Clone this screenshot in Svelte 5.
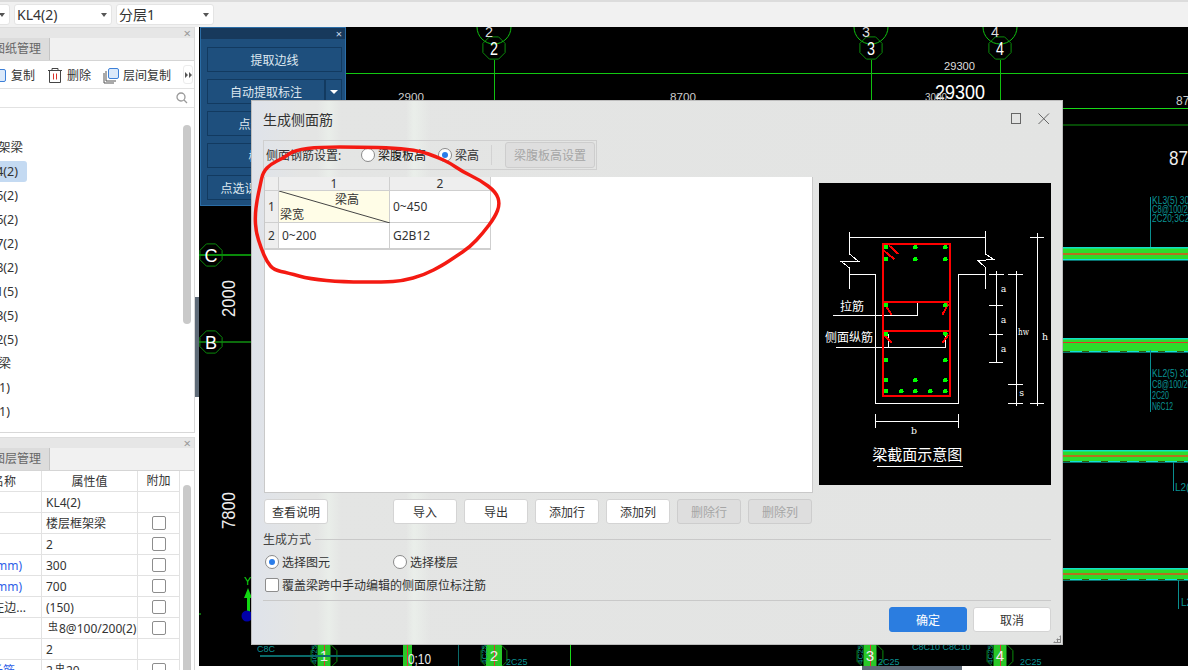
<script>
	const treeRows = [
		{ text: '楼层框架梁', end: 23 },
		{ text: 'KL4(2)', end: 18, selected: true },
		{ text: 'KL5(2)', end: 18 },
		{ text: 'KL6(2)', end: 18 },
		{ text: 'KL7(2)', end: 18 },
		{ text: 'KL8(2)', end: 18 },
		{ text: 'KL1(5)', end: 18 },
		{ text: 'KL3(5)', end: 18 },
		{ text: 'KL2(5)', end: 18 },
		{ text: '非框架梁', end: 11 },
		{ text: 'L1(1)', end: 10 },
		{ text: 'L2(1)', end: 10 }
	];

	const props = [
		{ name: '', value: 'KL4(2)', check: false },
		{ name: '', value: '楼层框架梁', check: true },
		{ name: '', value: '2', check: true },
		{ name: '截面宽度(mm)', end: 22, value: '300', check: true, blue: true },
		{ name: '截面高度(mm)', end: 22, value: '700', check: true, blue: true },
		{ name: '轴线距梁左边...', end: 26, value: '(150)', check: true },
		{ name: '', value: '8@100/200(2)', bar: true, check: true },
		{ name: '', value: '2', check: false },
		{ name: '上部通长筋', end: 15, value: '2', bar2: '20', check: true, blue: true }
	];

	const dots = [
		[213, 202], [301, 202], [391, 202], [213, 238], [301, 238], [391, 238],
		[213, 376], [391, 376], [213, 462], [391, 462], [213, 541], [391, 541],
		[213, 601], [301, 601], [391, 601], [213, 634], [259, 634], [301, 634], [346, 634], [391, 634]
	];

	// freehand ring drawn over the table
	const ring = [
		[283, 158], [271, 164], [263, 172], [260, 186], [257, 200], [255, 216], [256, 232], [261, 248],
		[267, 262], [274, 270], [288, 273], [310, 279], [343, 282], [384, 282], [402, 281], [424, 275],
		[443, 265], [455, 257], [470, 247], [483, 233], [495, 217], [500, 204], [496, 192], [480, 180],
		[463, 172], [450, 163], [437, 157], [420, 151], [395, 148], [360, 147], [320, 147], [295, 150], [283, 158]
	];
	const ringPath = ring.reduce((d, p, i) => {
		if (i === 0) return `M${p[0]} ${p[1]}`;
		const prev = ring[i - 1];
		return `${d} Q${prev[0]} ${prev[1]} ${(prev[0] + p[0]) / 2} ${(prev[1] + p[1]) / 2}`;
	}, '') + ' L283 158';

	const columns = [
		{ x: 494, label: '2' },
		{ x: 871, label: '3' },
		{ x: 1000, label: '4' }
	];
	const footColumns = [
		{ x: 324, w: 13, label: '1' },
		{ x: 494, w: 16, label: '2' },
		{ x: 870, w: 13, label: '3' },
		{ x: 1000, w: 13, label: '4' }
	];
	const hexagon = (cx, cy, r) =>
		[0, 1, 2, 3, 4, 5, 6, 7]
			.map((i) => {
				const a = (Math.PI / 4) * i + Math.PI / 8;
				return `${(cx + r * Math.cos(a)).toFixed(1)},${(cy + r * Math.sin(a)).toFixed(1)}`;
			})
			.join(' ');
	const beams = [
		{ y: 247, h: 13, band: '#b5701e', by: 253 },
		{ y: 338, h: 14, band: '#e0342a', by: 342, dash: true },
		{ y: 450, h: 12, band: '#b5701e', by: 455, dash: true },
		{ y: 568, h: 12, band: '#b5701e', by: 573, dash: true }
	];
</script>

<div class="app">
	<header class="topbar">
		<div class="select first"><span class="caret"></span></div>
		<div class="select"><span>KL4(2)</span><span class="caret"></span></div>
		<div class="select"><span>分层1</span><span class="caret"></span></div>
	</header>

	<div class="body">
		<aside class="side">
			<section class="panel upper">
				<div class="strip"><span class="x">×</span></div>
				<div class="tabs"><span class="tab"><span>图纸管理</span></span></div>
				<div class="tools">
					<span class="tool copy"><i class="bluebox"></i>复制</span>
					<span class="tool del">
						<svg width="16" height="17" viewBox="0 0 16 17" fill="none" stroke="#444">
							<path d="M1 3.5H15M5 3.5V1.5H11V3.5M2.5 3.5V15.5H13.5V3.5" />
							<path d="M6.5 6.5V12.5M9.5 6.5V12.5" stroke="#d9342b" />
						</svg>
						删除
					</span>
					<span class="tool floor">
						<svg width="16" height="16" viewBox="0 0 16 16" fill="none">
							<path d="M1 5V15H11" stroke="#555" />
							<path d="M3 3V13H13" stroke="#555" />
							<rect x="5.5" y="0.5" width="10" height="10" rx="1.5" fill="#dbe9fa" stroke="#3d80d8" />
						</svg>
						层间复制
					</span>
					<span class="more">
						<svg width="7" height="6" viewBox="0 0 7 6" fill="#555"><path d="M0 0L3 3L0 6ZM4 0L7 3L4 6Z" /></svg>
					</span>
				</div>
				<div class="search">
					<svg width="12" height="12" viewBox="0 0 12 12" fill="none" stroke="#9a9a9a" stroke-width="1.3">
						<circle cx="5" cy="5" r="4" /><path d="M8 8L11 11" />
					</svg>
				</div>
				<div class="tree">
					{#each treeRows as row}
						<div class="tree-row">
							<span class="tree-item" class:selected={row.selected} style="width:{row.end}px"><span>{row.text}</span></span>
						</div>
					{/each}
				</div>
				<div class="scroll upper-scroll"></div>
			</section>

			<section class="panel lower">
				<div class="strip"><span class="x">×</span></div>
				<div class="tabs"><span class="tab"><span>图层管理</span></span></div>
				<div class="prop-table">
					<div class="prop-row head">
						<span class="c1"><span class="name-in" style="padding-right:25px">属性名称</span></span>
						<span class="c2 center">属性值</span>
						<span class="c3 center">附加</span>
					</div>
					{#each props as p}
						<div class="prop-row">
							<span class="c1">
								{#if p.name}<span class="name-in" class:blue={p.blue} style="padding-right:{41 - p.end}px">{p.name}</span>{/if}
							</span>
							<span class="c2">
								{#if p.bar}<sup class="rebar">虫</sup>{/if}{#if p.bar2}{p.value}<sup class="rebar">虫</sup>{p.bar2}{:else}{p.value}{/if}
							</span>
							<span class="c3 center">{#if p.check}<i class="box"></i>{/if}</span>
						</div>
					{/each}
				</div>
				<div class="scroll lower-scroll"></div>
			</section>
		</aside>

		<div class="gutter"><div class="grip"></div></div>

		<main class="work">
			<div class="canvas">
				<svg class="cad" width="989" height="639" viewBox="199 27 989 639" font-family="Liberation Sans, sans-serif">
					<rect x="199" y="27" width="989" height="639" fill="#000" />

					<path d="M346 73.5H1188" stroke="#12c912" />
					<path d="M1063 108.5H1188" stroke="#18d818" />
					<path d="M1063 125H1188" stroke="#064a06" stroke-width="2" />

					{#each columns as c}
						<circle cx={c.x} cy="27" r="17" fill="none" stroke="#10c010" />
						<polygon points={hexagon(c.x, 48, 12)} fill="none" stroke="#0b8a0b" />
						<path d="M{c.x + 0.5} 60V100" stroke="#10c010" />
						<text x={c.x - 9} y="37" fill="#ddd" font-size="15" textLength="8" lengthAdjust="spacingAndGlyphs">{c.label}</text>
						<text x={c.x - 4} y="55" fill="#fff" font-size="19" textLength="8" lengthAdjust="spacingAndGlyphs">{c.label}</text>
					{/each}

					<text x="944" y="70" fill="#ddd" font-size="11" textLength="31" lengthAdjust="spacingAndGlyphs">29300</text>
					<text x="935" y="99" fill="#fff" font-size="20" textLength="50" lengthAdjust="spacingAndGlyphs">29300</text>
					<text x="398" y="101" fill="#ccc" font-size="11" textLength="26" lengthAdjust="spacingAndGlyphs">2900</text>
					<text x="670" y="101" fill="#ccc" font-size="11" textLength="26" lengthAdjust="spacingAndGlyphs">8700</text>
					<text x="925" y="101" fill="#ccc" font-size="11" textLength="22" lengthAdjust="spacingAndGlyphs">3000</text>
					<text x="1176" y="105" fill="#ccc" font-size="12">87</text>
					<text x="1169" y="165" fill="#eee" font-size="20" textLength="19" lengthAdjust="spacingAndGlyphs">87</text>

					{#each beams as b}
						<rect x="1063" y={b.y} width="125" height={b.h} fill="#2bdc2b" />
						<rect x="1063" y={b.y} width="125" height="1.5" fill="#10e0c8" />
						<rect x="1063" y={b.y + b.h - 1} width="125" height="1.5" fill="#10e0d8" />
						<rect x="1063" y={b.by} width="125" height={b.band === '#e0342a' ? 1 : 2} fill={b.band} />
						{#if b.dash}
							<path d="M1063 {b.y + b.h - 0.5}H1188" stroke="#2a5a10" stroke-dasharray="7 12" />
						{/if}
					{/each}

					<g fill="#0a9494" font-size="10">
						<path d="M1150.5 197V247M1150.5 350V412M1173.5 462V491M1178.5 580V609" stroke="#0a8f8f" fill="none" />
						<text x="1152" y="204" textLength="42" lengthAdjust="spacingAndGlyphs">KL3(5) 300</text>
						<text x="1152" y="213" textLength="44" lengthAdjust="spacingAndGlyphs">C8@100/200</text>
						<text x="1152" y="222" textLength="42" lengthAdjust="spacingAndGlyphs">2C20;3C20</text>
						<text x="1152" y="377" textLength="42" lengthAdjust="spacingAndGlyphs">KL2(5) 300</text>
						<text x="1152" y="388" textLength="44" lengthAdjust="spacingAndGlyphs">C8@100/200</text>
						<text x="1152" y="399" textLength="17" lengthAdjust="spacingAndGlyphs">2C20</text>
						<text x="1152" y="410" textLength="21" lengthAdjust="spacingAndGlyphs">N6C12</text>
						<text x="1175" y="491">L2(</text>
						<text x="1181" y="606">L2</text>
					</g>

					<path d="M199 255H251" stroke="#0a8a0a" stroke-width="2" />
					<path d="M199 342H251" stroke="#18d818" />
					<polygon points={hexagon(211, 255, 12)} fill="none" stroke="#0b8a0b" />
					<polygon points={hexagon(211, 342, 12)} fill="none" stroke="#0b8a0b" />
					<text x="211" y="262" fill="#fff" font-size="18" text-anchor="middle">C</text>
					<text x="211" y="349" fill="#fff" font-size="18" text-anchor="middle">B</text>
					<text transform="translate(235 317) rotate(-90)" fill="#eee" font-size="19" textLength="37" lengthAdjust="spacingAndGlyphs">2000</text>
					<text transform="translate(235 529) rotate(-90)" fill="#eee" font-size="19" textLength="37" lengthAdjust="spacingAndGlyphs">7800</text>

					<path d="M199 614H201" stroke="#18d818" />
					<text x="244" y="585" fill="#12d812" font-size="11">Y</text>
					<path d="M248 588L252 598H250V612H247V598H244Z" fill="#12d812" />
					<circle cx="247" cy="616" r="5.5" fill="#0000a8" />

					{#each footColumns as c}
						<rect x={c.x - c.w / 2} y="645" width={c.w} height="21" fill="#28c828" />
						<path d="M{c.x + 0.5} 645V666" stroke="#d33" />
						<polygon points={hexagon(c.x, 656, 14)} fill="none" stroke="#0b8a0b" />
						<text x={c.x} y="661" fill="#eee" font-size="15" text-anchor="middle">{c.label}</text>
						<text transform="translate({c.x - 7} 664) rotate(-90)" fill="#0a9494" font-size="8">4C25</text>
					{/each}
					<rect x="403" y="645" width="9" height="21" fill="#28c828" />
					<path d="M407.5 645V666" stroke="#d33" />
					<path d="M260 656H403" stroke="#0a6a6a" stroke-width="2" />
					<text x="408" y="664" fill="#eee" font-size="15" textLength="23" lengthAdjust="spacingAndGlyphs">0;10</text>
					<path d="M458.5 645V666" stroke="#0a6a6a" />
					<path d="M570.5 645V666" stroke="#18d818" />
					<g fill="#0a9494" font-size="9">
						<text x="257" y="652">C8C</text>
						<text x="506" y="665">2C25</text>
						<text x="878" y="665">2C25</text>
						<text x="912" y="650">C8C10 C8C10</text>
						<text x="1020" y="665">2C25</text>
					</g>
				</svg>

				<div class="extract">
					<div class="ex-head"><span>×</span></div>
					<div class="ex-btn">提取边线</div>
					<div class="ex-split">
						<div class="ex-btn grow">自动提取标注</div>
						<div class="ex-btn drop"><i></i></div>
					</div>
					<div class="ex-btn">点选提取标注</div>
					<div class="ex-btn shifted">校核标注</div>
					<div class="ex-btn">点选识别梁集中标注</div>
				</div>

				<div class="dialog">
					<div class="dlg-title">
						<span>生成侧面筋</span>
						<span class="win">
							<svg width="40" height="14" viewBox="0 0 40 14" fill="none" stroke="#666">
								<rect x="1.5" y="1.5" width="9" height="10" />
								<path d="M28.5 1.5L39 12M39 1.5L28.5 12" />
							</svg>
						</span>
					</div>

					<div class="mode-bar">
						<span class="mode-label">侧面钢筋设置:</span>
						<span class="opt first-opt"><i class="radio"></i>梁腹板高</span>
						<span class="opt"><i class="radio on"></i>梁高</span>
						<span class="sep"></span>
						<button class="btn disabled web-btn">梁腹板高设置</button>
					</div>

					<div class="middle">
						<div class="sheet">
							<div class="grid">
								<div class="hd"></div>
								<div class="hd">1</div>
								<div class="hd">2</div>
								<div class="hd num tall">1</div>
								<div class="cell corner">
									<svg width="111" height="32" viewBox="0 0 111 32"><path d="M0 0L111 32" stroke="#444" /></svg>
									<span class="c-top">梁高</span>
									<span class="c-bot">梁宽</span>
								</div>
								<div class="cell tall-cell">0~450</div>
								<div class="hd num">2</div>
								<div class="cell">0~200</div>
								<div class="cell">G2B12</div>
							</div>
						</div>

						<svg class="section" width="232" height="302" viewBox="12 10 696 905" shape-rendering="crispEdges">
							<rect x="12" y="10" width="696" height="905" fill="#000" />
							<g fill="none" stroke="#fff" stroke-width="3">
								<path d="M103 172H511M103 155V222L130 244L80 246L103 264V326M511 153V222L538 240L488 241L511 263V326" />
								<path d="M103 284H181V670H430V284H512" />
								<path d="M54 408H308V366M63 502H392V462M220 502V462" />
								<path d="M545 272V548M522 284H568M522 377H564M522 463H564M522 548H564" />
								<path d="M605 272V678M578 284H624M578 614H624M578 670H624" />
								<path d="M667 160V678M645 172H687M645 670H687" />
								<path d="M181 725H430M181 703V745M430 703V745" />
							</g>
							<g fill="none" stroke="#f00" stroke-width="6">
								<rect x="204" y="191" width="201" height="457" />
								<path d="M204 366H405M204 452H405" />
								<path d="M222 197L250 222M206 212L238 238M208 372L230 405M400 372L382 405M208 465L230 490M400 465L382 490" />
							</g>
							{#each dots as d}
								<circle cx={d[0]} cy={d[1]} r="7" fill="#0f0" />
							{/each}
							<g fill="#fff" font-family="Noto Sans CJK SC, sans-serif" font-size="36" shape-rendering="auto">
								<text x="75" y="394">拉筋</text>
								<text x="30" y="487">侧面纵筋</text>
								<text x="172" y="842" font-size="45">梁截面示意图</text>
							</g>
							<g fill="#fff" font-family="DejaVu Serif, serif" font-size="28">
								<text x="557" y="338">a</text>
								<text x="557" y="431">a</text>
								<text x="557" y="518">a</text>
								<text x="609" y="466" textLength="33" lengthAdjust="spacingAndGlyphs">hw</text>
								<text x="613" y="650">s</text>
								<text x="681" y="482">h</text>
								<text x="288" y="762">b</text>
							</g>
							<path d="M186 860H444" stroke="#fff" stroke-width="5" />
						</svg>
					</div>

					<div class="actions">
						<button class="btn">查看说明</button>
						<span class="spacer"></span>
						<button class="btn">导入</button>
						<button class="btn">导出</button>
						<button class="btn">添加行</button>
						<button class="btn">添加列</button>
						<button class="btn disabled">删除行</button>
						<button class="btn disabled">删除列</button>
					</div>

					<div class="legend"><span>生成方式</span><i></i></div>
					<div class="scope">
						<span class="opt scope-a"><i class="radio on"></i>选择图元</span>
						<span class="opt"><i class="radio"></i>选择楼层</span>
					</div>
					<div class="cover"><i class="box"></i>覆盖梁跨中手动编辑的侧面原位标注筋</div>
					<div class="rule"></div>
					<div class="foot">
						<button class="btn primary">确定</button>
						<button class="btn">取消</button>
					</div>

					<svg class="ring" width="812" height="545" viewBox="251 100 812 545">
						<path d={ringPath} fill="none" stroke="#f41a12" stroke-width="3.5" stroke-linecap="round" stroke-linejoin="round" />
					</svg>
					<span class="resize"></span>
				</div>
			</div>
			<div class="bottom-strip"><div class="bottom-grip"></div></div>
		</main>
	</div>
</div>

<style>
	:global(body) {
		margin: 0;
		background: #fff;
	}
	.app {
		width: 1188px;
		height: 670px;
		overflow: hidden;
		display: flex;
		flex-direction: column;
		font-family: 'Noto Sans', 'Noto Sans CJK SC', sans-serif;
		font-size: 12px;
		color: #333;
		background: #fff;
	}
	i {
		display: block;
	}
	.topbar {
		height: 27px;
		box-sizing: border-box;
		flex: none;
		border-top: 2px solid #dcdcdc;
		background: #f1f1f1;
		display: flex;
		gap: 4px;
		align-items: center;
		margin-left: -26px;
	}
	.select {
		width: 98px;
		height: 21px;
		background: #fff;
		border: 1px solid #e4e4e4;
		border-radius: 3px;
		box-sizing: border-box;
		display: flex;
		align-items: center;
		justify-content: space-between;
		padding: 0 4px 0 2px;
		font-size: 14px;
		line-height: 1;
	}
	.select.first {
		justify-content: flex-end;
		width: 36px;
	}
	.caret {
		width: 0;
		height: 0;
		border: 3px solid transparent;
		border-top: 4px solid #555;
		border-bottom: 0;
	}
	.body {
		flex: 1;
		display: flex;
		min-height: 0;
	}
	.side {
		width: 195px;
		flex: none;
		display: flex;
		flex-direction: column;
		gap: 4px;
	}
	.panel {
		position: relative;
		border-right: 1px solid #d8d8d8;
		border-bottom: 1px solid #d8d8d8;
		box-sizing: border-box;
		overflow: hidden;
		background: #fff;
	}
	.upper {
		height: 406px;
	}
	.lower {
		flex: 1;
		border-bottom: 0;
	}
	.strip {
		height: 11px;
		box-sizing: border-box;
		background: #e6e6e6;
		border-top: 1px solid #ddd;
		display: flex;
		justify-content: flex-end;
		align-items: center;
		padding-right: 3px;
	}
	.x {
		font-size: 13px;
		color: #999;
		line-height: 1;
	}
	.tabs {
		height: 23px;
		box-sizing: border-box;
		background: #f1f1f1;
		border-bottom: 1px solid #d5d5d5;
		display: flex;
	}
	.tab {
		width: 50px;
		overflow: hidden;
		white-space: nowrap;
		background: #dcdcdc;
		border-right: 1px solid #c4c4c4;
		line-height: 22px;
		color: #666;
		padding-right: 8px;
		box-sizing: border-box;
		display: flex;
		justify-content: flex-end;
		font-size: 12px;
	}
	.tab span {
		flex: none;
	}
	.tools {
		height: 28px;
		box-sizing: border-box;
		padding-top: 2px;
		border-bottom: 1px solid #e2e2e2;
		display: flex;
		align-items: center;
		font-size: 12px;
		position: relative;
	}
	.tool {
		display: flex;
		align-items: center;
		gap: 4px;
		line-height: 1;
	}
	.copy {
		margin-left: -7px;
		gap: 5px;
	}
	.bluebox {
		width: 13px;
		height: 13px;
		border: 1px solid #3d80d8;
		border-radius: 2px;
		background: #dbe9fa;
		box-sizing: border-box;
	}
	.del {
		margin-left: 12px;
	}
	.floor {
		margin-left: 12px;
	}
	.more {
		margin-left: auto;
		margin-right: 1px;
		margin-top: -2px;
		width: 10px;
		height: 19px;
		box-sizing: border-box;
		border: 1px solid #ececec;
		border-radius: 3px;
		display: flex;
		align-items: center;
		justify-content: center;
	}
	.search {
		height: 19px;
		box-sizing: border-box;
		border-bottom: 1px solid #e2e2e2;
		display: flex;
		align-items: center;
		justify-content: flex-end;
		padding-right: 6px;
	}
	.tree {
		padding-top: 27px;
	}
	.tree-row {
		height: 24px;
		display: flex;
		align-items: center;
		line-height: 21px;
	}
	.tree-item {
		display: flex;
		justify-content: flex-end;
		overflow: hidden;
		white-space: nowrap;
		font-size: 12.5px;
	}
	.tree-item span {
		flex: none;
	}
	.tree-item.selected {
		background: #c4daf2;
		border-radius: 0 3px 3px 0;
		padding-right: 9px;
	}
	.scroll {
		position: absolute;
		left: 183px;
		width: 8px;
		background: #c9c9c9;
		border-radius: 4px;
	}
	.upper-scroll {
		top: 98px;
		height: 199px;
	}
	.lower-scroll {
		top: 48px;
		height: 200px;
	}
	.prop-row {
		display: flex;
		height: 21px;
		border-bottom: 1px solid #e2e2e2;
		box-sizing: border-box;
		line-height: 22px;
		font-size: 12px;
	}
	.prop-table {
		width: 179px;
		border-right: 1px solid #e2e2e2;
	}
	.c1 {
		width: 42px;
		flex: none;
		border-right: 1px solid #e2e2e2;
		box-sizing: border-box;
		overflow: hidden;
		display: flex;
		justify-content: flex-end;
		white-space: nowrap;
	}
	.name-in {
		flex: none;
	}
	.name-in.blue {
		color: #2f5fe8;
	}
	.c2 {
		width: 96px;
		flex: none;
		border-right: 1px solid #e2e2e2;
		box-sizing: border-box;
		padding-left: 4px;
		overflow: hidden;
		white-space: nowrap;
	}
	.c3 {
		flex: 1;
		display: flex;
		align-items: center;
		justify-content: center;
		padding: 0;
	}
	.center {
		text-align: center;
		padding-left: 0;
	}
	.rebar {
		font-size: 10px;
		line-height: 0;
		vertical-align: 3px;
		margin: 0 1px 0 2px;
	}
	.box {
		width: 14px;
		height: 14px;
		background: #fff;
		border: 1px solid #8d8d8d;
		border-radius: 2px;
		box-sizing: border-box;
		flex: none;
	}
	.gutter {
		width: 4px;
		flex: none;
		padding-top: 270px;
	}
	.grip {
		height: 100px;
		background: #5f6b78;
	}
	.work {
		flex: 1;
		display: flex;
		flex-direction: column;
		min-width: 0;
	}
	.canvas {
		position: relative;
		height: 639px;
		flex: none;
	}
	.cad {
		display: block;
	}
	.bottom-strip {
		flex: 1;
		padding-left: 663px;
	}
	.bottom-grip {
		width: 100px;
		height: 100%;
		background: #5f6b78;
	}
	.extract {
		position: absolute;
		left: 1px;
		top: 0;
		width: 146px;
		height: 179px;
		box-sizing: border-box;
		background: #1e4f7d;
		border: 1px solid #2b6da6;
		color: #dfe8f0;
		font-size: 12px;
		padding: 0 3px 0 6px;
		display: flex;
		flex-direction: column;
	}
	.ex-head {
		height: 11px;
		margin: 0 -3px 8px -6px;
		background: #17395c;
		display: flex;
		align-items: center;
		justify-content: flex-end;
		padding-right: 3px;
		font-size: 11px;
		line-height: 1;
		color: #c8d8e8;
	}
	.ex-btn {
		height: 25px;
		border: 1px solid #123a60;
		box-sizing: border-box;
		text-align: center;
		line-height: 25px;
		margin-bottom: 7px;
		white-space: nowrap;
	}
	.ex-btn.shifted {
		padding-right: 4px;
	}
	.ex-split {
		display: flex;
	}
	.grow {
		flex: 1;
	}
	.drop {
		width: 17px;
		display: flex;
		align-items: center;
		justify-content: center;
	}
	.drop i {
		width: 0;
		height: 0;
		border: 4px solid transparent;
		border-top: 4px solid #fff;
		border-bottom: 0;
	}
	.dialog {
		position: absolute;
		left: 52px;
		top: 73px;
		width: 812px;
		height: 545px;
		box-sizing: border-box;
		border: 1px solid #bdbdbd;
		background:
			linear-gradient(90deg, transparent 8%, rgba(238, 245, 238, 0.55) 9.5%, transparent 11%),
			linear-gradient(90deg, transparent 19%, rgba(238, 245, 238, 0.6) 20%, transparent 22%),
			linear-gradient(90deg, #dfe3ea 0, #e4e5e4 6%, #e3e4e3 100%);
		padding: 0 11px;
		display: flex;
		flex-direction: column;
		color: #333;
		font-size: 12px;
	}
	.dlg-title {
		height: 39px;
		box-sizing: border-box;
		padding-bottom: 4px;
		display: flex;
		align-items: center;
		justify-content: space-between;
		font-size: 14px;
		flex: none;
	}
	.win {
		display: flex;
		margin-right: 1px;
	}
	.mode-bar {
		height: 30px;
		width: 334px;
		box-sizing: border-box;
		border: 1px solid #f0f0f0;
		outline: 1px solid #cfcfcf;
		outline-offset: -1px;
		display: flex;
		align-items: center;
		padding-left: 2px;
		flex: none;
		white-space: nowrap;
	}
	.mode-label {
		width: 95px;
		flex: none;
	}
	.opt {
		display: flex;
		align-items: center;
		gap: 3px;
	}
	.first-opt {
		width: 77px;
		flex: none;
		color: #111;
	}
	.radio {
		width: 14px;
		height: 14px;
		box-sizing: border-box;
		border: 1px solid #8a8a8a;
		border-radius: 50%;
		background: #fff;
		flex: none;
		position: relative;
	}
	.radio.on::after {
		content: '';
		position: absolute;
		left: 3px;
		top: 3px;
		width: 6px;
		height: 6px;
		border-radius: 50%;
		background: #2b7de9;
	}
	.sep {
		width: 1px;
		height: 20px;
		background: #d2d2d2;
		margin: 0 13px 0 12px;
		flex: none;
	}
	.btn {
		width: 64px;
		height: 25px;
		padding: 0;
		font: inherit;
		color: #333;
		background: #fff;
		border: 1px solid #d4d4d4;
		border-radius: 3px;
		box-sizing: border-box;
		flex: none;
	}
	.btn.disabled {
		background: #dedede;
		border-color: #cdcdcd;
		color: #a6a6a6;
	}
	.web-btn {
		width: 90px;
		height: 26px;
	}
	.middle {
		display: flex;
		gap: 6px;
		margin-top: 7px;
		height: 315px;
		flex: none;
		align-items: flex-start;
		padding-left: 1px;
	}
	.sheet {
		width: 549px;
		height: 316px;
		background: #fff;
		border: 1px solid #c9c9c9;
		border-top: 0;
		box-sizing: border-box;
		flex: none;
	}
	.section {
		margin-top: 6px;
		display: block;
		flex: none;
	}
	.grid {
		display: grid;
		grid-template-columns: 14px 111px 101px;
		grid-template-rows: 14px 32px 26px;
		width: 226px;
		border-bottom: 1px solid #cfcfcf;
		font-size: 12px;
	}
	.hd {
		background: #eeeeee;
		border-right: 1px solid #cfcfcf;
		border-bottom: 1px solid #cfcfcf;
		text-align: center;
		line-height: 14px;
		box-sizing: border-box;
	}
	.num {
		display: flex;
		align-items: center;
		justify-content: center;
	}
	.cell {
		border-right: 1px solid #cfcfcf;
		border-bottom: 1px solid #cfcfcf;
		box-sizing: border-box;
		padding-left: 3px;
		display: flex;
		align-items: center;
	}
	.corner {
		background: #fffde7;
		position: relative;
		padding: 0;
	}
	.corner svg {
		position: absolute;
		left: 0;
		top: 0;
	}
	.c-top {
		position: absolute;
		left: 56px;
		top: 1px;
		line-height: 16px;
	}
	.c-bot {
		position: absolute;
		left: 1px;
		top: 16px;
		line-height: 16px;
	}
	.actions {
		display: flex;
		gap: 7px;
		margin-top: 7px;
		padding-left: 1px;
		flex: none;
		width: 551px;
		box-sizing: border-box;
	}
	.spacer {
		width: 51px;
		flex: none;
	}
	.legend {
		display: flex;
		align-items: center;
		gap: 4px;
		margin-top: 6px;
		height: 18px;
		color: #444;
		flex: none;
	}
	.legend i {
		flex: 1;
		height: 1px;
		background: #c9c9c9;
	}
	.scope {
		display: flex;
		margin-top: 5px;
		padding-left: 2px;
		height: 18px;
		flex: none;
		align-items: center;
	}
	.scope-a {
		width: 128px;
	}
	.cover {
		display: flex;
		align-items: center;
		gap: 3px;
		margin-top: 5px;
		height: 18px;
		padding-left: 2px;
		flex: none;
	}
	.rule {
		height: 1px;
		background: #c9c9c9;
		margin-top: 6px;
		flex: none;
	}
	.foot {
		display: flex;
		justify-content: flex-end;
		gap: 6px;
		margin-top: 6px;
	}
	.foot .btn {
		width: 78px;
	}
	.btn.primary {
		background: #2b7de0;
		border-color: #2b7de0;
		color: #fff;
	}
	.ring {
		position: absolute;
		left: -1px;
		top: -1px;
		pointer-events: none;
	}
	.resize {
		position: absolute;
		right: 1px;
		bottom: 1px;
		width: 8px;
		height: 8px;
		background-image: radial-gradient(#888 1px, transparent 1.2px);
		background-size: 3px 3px;
		clip-path: polygon(100% 0, 100% 100%, 0 100%);
	}
</style>
